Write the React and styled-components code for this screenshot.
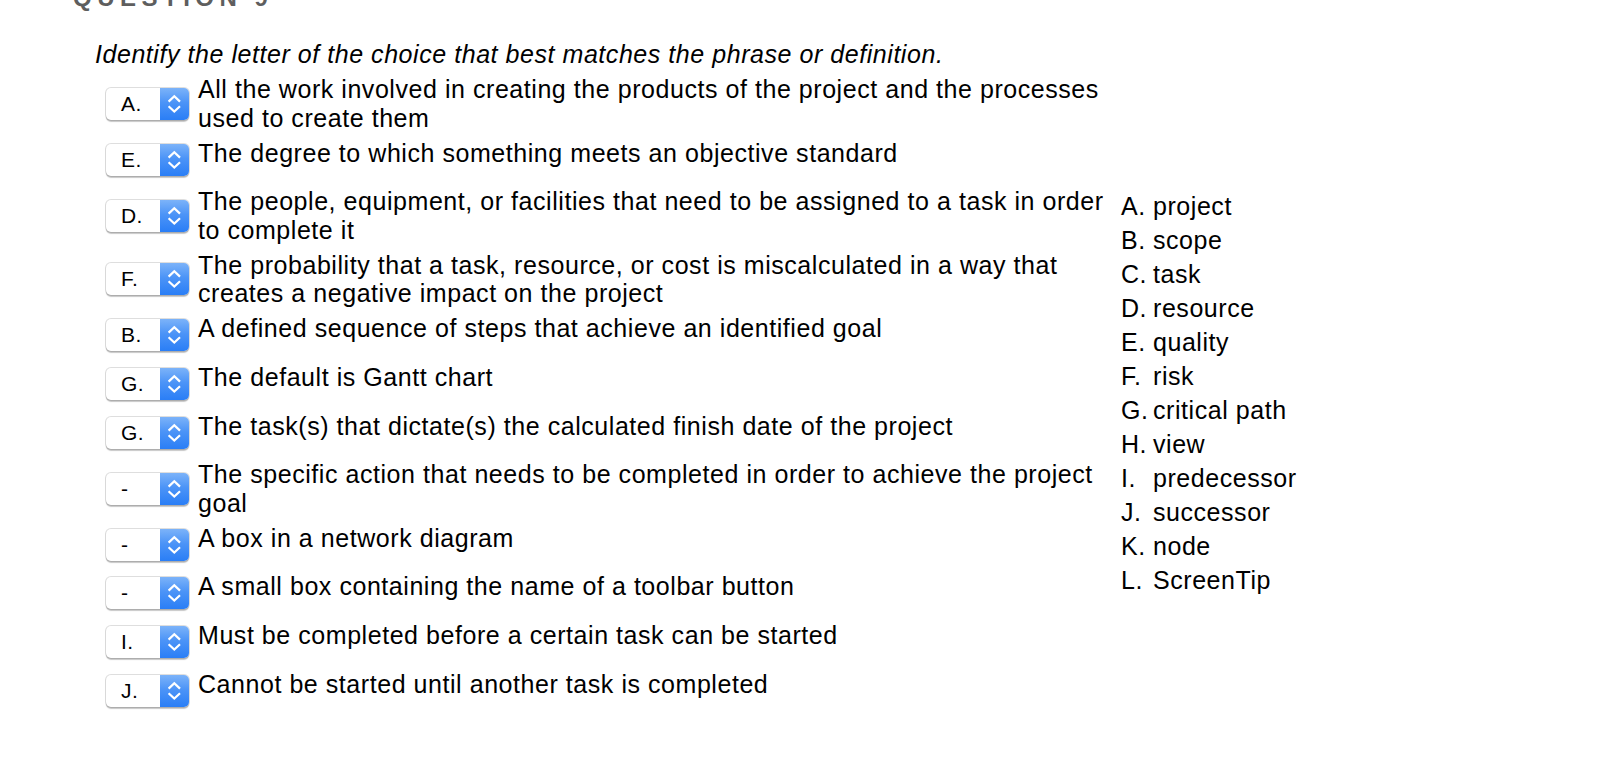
import React from "react";
import styled, { createGlobalStyle } from "styled-components";

const GlobalStyle = createGlobalStyle`
  html, body {
    margin: 0;
    padding: 0;
    background: #fff;
  }
  body {
    font-family: "Liberation Sans", Arial, Helvetica, sans-serif;
    color: #000;
  }
`;

const Page = styled.div`
  padding-left: 95px;
  overflow: hidden;
  height: 782px;
  box-sizing: border-box;
`;

const Heading = styled.div`
  margin: -15px 0 0 -22px;
  height: 26px;
  line-height: 26px;
  font-size: 24px;
  font-weight: bold;
  letter-spacing: 5.5px;
  color: #5e5e5e;
`;

const Instruction = styled.div`
  margin-top: 29px;
  font-size: 25px;
  line-height: 28.5px;
  letter-spacing: 0.55px;
  font-style: italic;
`;

const Body = styled.div`
  display: flex;
  align-items: center;
  margin-top: 6.5px;
`;

const Rows = styled.div`
  display: flex;
  flex-direction: column;
  gap: 6.6px;
  margin-left: 11px;
`;

const Row = styled.div`
  display: flex;
  align-items: center;
  gap: 9px;
  min-height: 42px;
`;

const Phrase = styled.div`
  align-self: flex-start;
  width: 915px;
  font-size: 25px;
  line-height: 28.5px;
  letter-spacing: 0.55px;
`;

const Select = styled.div`
  display: flex;
  flex: none;
  width: 83px;
  height: 32px;
  border-radius: 5px;
  overflow: hidden;
  background: #fff;
  box-shadow: 0 0 0 1px rgba(0, 0, 0, 0.13), 0 1.5px 1px rgba(0, 0, 0, 0.22);
`;

const Value = styled.div`
  flex: 1;
  padding-left: 15px;
  font-size: 21px;
  line-height: 32px;
  letter-spacing: 0.4px;
`;

const Stepper = styled.div`
  width: 29px;
  height: 32px;
  background: linear-gradient(#7cb3f9 0%, #4c94f7 45%, #2a7ef6 100%);
`;

const Choices = styled.div`
  margin-left: 8px;
  font-size: 25px;
  line-height: 34px;
  letter-spacing: 0.55px;
`;

const Choice = styled.div`
  display: flex;
`;

const ChoiceKey = styled.span`
  width: 32px;
  flex: none;
`;

const items = [
  { value: "A.", text: "All the work involved in creating the products of the project and the processes used to create them" },
  { value: "E.", text: "The degree to which something meets an objective standard" },
  { value: "D.", text: "The people, equipment, or facilities that need to be assigned to a task in order to complete it" },
  { value: "F.", text: "The probability that a task, resource, or cost is miscalculated in a way that creates a negative impact on the project" },
  { value: "B.", text: "A defined sequence of steps that achieve an identified goal" },
  { value: "G.", text: "The default is Gantt chart" },
  { value: "G.", text: "The task(s) that dictate(s) the calculated finish date of the project" },
  { value: "-", text: "The specific action that needs to be completed in order to achieve the project goal" },
  { value: "-", text: "A box in a network diagram" },
  { value: "-", text: "A small box containing the name of a toolbar button" },
  { value: "I.", text: "Must be completed before a certain task can be started" },
  { value: "J.", text: "Cannot be started until another task is completed" },
];

const choices = [
  ["A.", "project"],
  ["B.", "scope"],
  ["C.", "task"],
  ["D.", "resource"],
  ["E.", "quality"],
  ["F.", "risk"],
  ["G.", "critical path"],
  ["H.", "view"],
  ["I.", "predecessor"],
  ["J.", "successor"],
  ["K.", "node"],
  ["L.", "ScreenTip"],
];

function Arrows() {
  return (
    <svg width="29" height="32" viewBox="0 0 29 32">
      <polyline
        points="8.6,13.6 14.3,8.2 20,13.6"
        fill="none"
        stroke="#fff"
        strokeWidth="2.2"
      />
      <polyline
        points="8.6,18.2 14.3,23.6 20,18.2"
        fill="none"
        stroke="#fff"
        strokeWidth="2.2"
      />
    </svg>
  );
}

function Dropdown({ value }) {
  return (
    <Select>
      <Value>{value}</Value>
      <Stepper>
        <Arrows />
      </Stepper>
    </Select>
  );
}

export default function App() {
  return (
    <>
      <GlobalStyle />
      <Page>
        <Heading>QUESTION 9</Heading>
        <Instruction>
          Identify the letter of the choice that best matches the phrase or
          definition.
        </Instruction>
        <Body>
          <Rows>
            {items.map((item, i) => (
              <Row key={i}>
                <Dropdown value={item.value} />
                <Phrase>{item.text}</Phrase>
              </Row>
            ))}
          </Rows>
          <Choices>
            {choices.map(([key, label]) => (
              <Choice key={key}>
                <ChoiceKey>{key}</ChoiceKey>
                <span>{label}</span>
              </Choice>
            ))}
          </Choices>
        </Body>
      </Page>
    </>
  );
}
